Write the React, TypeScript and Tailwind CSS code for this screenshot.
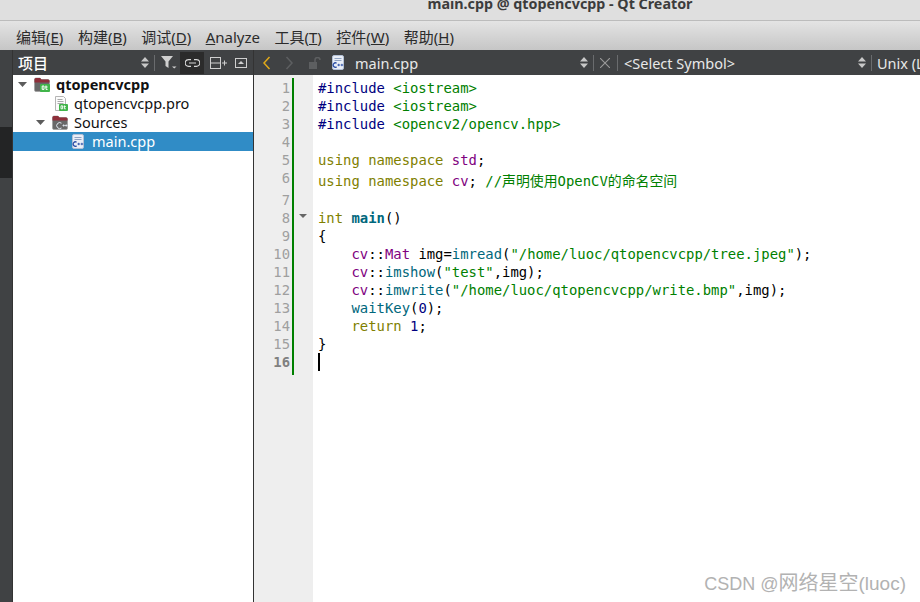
const ui = "font-['Noto_Sans','Noto_Sans_CJK_SC',sans-serif]";

const menus = [
  ["编辑(", "E", ")"],
  ["构建(", "B", ")"],
  ["调试(", "D", ")"],
  ["", "A", "nalyze"],
  ["工具(", "T", ")"],
  ["控件(", "W", ")"],
  ["帮助(", "H", ")"],
];

// colour shorthand for the code spans
const KW = "text-[#808000]";
const INC = "text-[#000080]";
const STR = "text-[#008000]";
const NS = "text-[#800080]";
const FN = "text-[#00677c]";

type Span = [string, string?];

const lines: { h: string; pad?: string; spans: Span[] }[] = [
  { h: "h-[18px]", spans: [["#include", INC], [" "], ["<iostream>", STR]] },
  { h: "h-[18px]", spans: [["#include", INC], [" "], ["<iostream>", STR]] },
  { h: "h-[18px]", spans: [["#include", INC], [" "], ["<opencv2/opencv.hpp>", STR]] },
  { h: "h-[18px]", spans: [] },
  { h: "h-[18px]", spans: [["using", KW], [" "], ["namespace", KW], [" "], ["std", NS], [";"]] },
  { h: "h-[22px]", pad: "pt-[3px]", spans: [["using", KW], [" "], ["namespace", KW], [" "], ["cv", NS], ["; "], ["//声明使用OpenCV的命名空间", STR]] },
  { h: "h-[18px]", spans: [] },
  { h: "h-[18px]", spans: [["int", KW], [" "], ["main", "text-[#00677c] font-bold"], ["()"]] },
  { h: "h-[18px]", spans: [["{"]] },
  { h: "h-[18px]", spans: [["    "], ["cv", NS], ["::"], ["Mat", NS], [" img="], ["imread", FN], ["("], ['"/home/luoc/qtopencvcpp/tree.jpeg"', STR], [");"]] },
  { h: "h-[18px]", spans: [["    "], ["cv", NS], ["::"], ["imshow", FN], ["("], ['"test"', STR], [",img);"]] },
  { h: "h-[18px]", spans: [["    "], ["cv", NS], ["::"], ["imwrite", FN], ["("], ['"/home/luoc/qtopencvcpp/write.bmp"', STR], [",img);"]] },
  { h: "h-[18px]", spans: [["    "], ["waitKey", FN], ["("], ["0", INC], [");"]] },
  { h: "h-[18px]", spans: [["    "], ["return", KW], [" "], ["1", INC], [";"]] },
  { h: "h-[18px]", spans: [["}"]] },
  { h: "h-[18px]", spans: [] },
];

function UpDown({ className = "" }: { className?: string }) {
  return (
    <svg width="8" height="11" viewBox="0 0 8 11" className={className}>
      <path d="M4 0 8 4.500H0zM4 11 0 6.500H8z" fill="#c8c8c8" />
    </svg>
  );
}

function FolderIcon({ badge }: { badge: "qt" | "c" }) {
  return (
    <svg width="16" height="15" viewBox="0 0 16 15" className="shrink-0">
      <path d="M.5 2.500Q.5 1 2 1h4l1.500 1.500H14q1.500 0 1.500 1.500v9q0 1.500-1.500 1.500H2Q.5 14.500.5 13z" fill="#686868" stroke="#9a9a9a" strokeWidth=".6" />
      <path d="M.5 2.500Q.5 1 2 1h4l1.500 1.500H14q1.500 0 1.500 1.500v1.500H.5z" fill="#8f2f3a" />
      {badge === "qt" ? (
        <g>
          <rect x="6" y="7" width="10" height="8" rx="1" fill="#41b54a" />
          <path d="M8.200 9h1.800v3.400H8.200zM12 8.500v3.900h1.600M11.200 10h2.400" fill="none" stroke="#fff" strokeWidth="1" />
        </g>
      ) : (
        <g fill="none" stroke="#e4eaf4" strokeWidth="1">
          <path d="M9.500 8.200a3 3 0 1 0 0 4.800" />
          <path d="M10.500 10.500h2.400M11.700 9.300v2.400M13 10.500h2.400M14.200 9.300v2.400" strokeWidth=".8" />
        </g>
      )}
    </svg>
  );
}

function FileIcon({ kind }: { kind: "qt" | "cpp" }) {
  if (kind === "cpp") {
    return (
      <svg width="12" height="15" viewBox="0 0 12 15" className="shrink-0">
        <rect x=".5" y=".5" width="11" height="14" rx="1.500" fill="#e9eef7" stroke="#b3c0d6" />
        <path d="M2.500 3.500h7M2.500 5.500h7" stroke="#8fa2c2" />
        <path d="M4.600 8.200a2.200 2.200 0 1 0 0 3.700" fill="none" stroke="#2b4ea6" strokeWidth="1.300" />
        <path d="M5.400 10h2.600M6.700 8.800v2.400M8.600 10h2.600M9.900 8.800v2.400" stroke="#2b4ea6" strokeWidth=".9" />
      </svg>
    );
  }
  return (
    <svg width="14" height="15" viewBox="0 0 14 15" className="shrink-0">
      <path d="M1.500.5h8l2 2v12h-10z" fill="#fbfbfb" stroke="#b5b5b5" />
      <path d="M3.500 3.500h5M3.500 5.500h6M3.500 7.500h6" stroke="#a9a9a9" />
      <rect x="5" y="8" width="9" height="7" rx="1" fill="#41b54a" />
      <path d="M7 9.800h1.600v3H7zM10.400 9.400v3.400h1.400M9.700 10.600h2.200" fill="none" stroke="#fff" strokeWidth=".9" />
    </svg>
  );
}

function Arrow() {
  return (
    <svg width="9" height="5" viewBox="0 0 9 5" className="shrink-0">
      <path d="M0 0h9L4.500 5z" fill="#5c5c5c" />
    </svg>
  );
}

function Sep() {
  return <span className="block w-px h-[16px] bg-[#6a6c6e] shrink-0" />;
}

export default function App() {
  return (
    <div className={`relative w-[920px] h-[602px] overflow-hidden flex flex-col bg-white ${ui}`}>
      {/* title bar */}
      <div className="h-[21px] shrink-0 bg-[#dfdfdf] border-b border-[#bcbcbc] flex justify-center overflow-hidden">
        <span className="ml-[200px] -mt-[6px] text-[14.3px] font-bold text-[#3c3c3c] leading-[20px]">
          main.cpp @ qtopencvcpp - Qt Creator
        </span>
      </div>

      {/* menu bar */}
      <div className="h-[29px] shrink-0 bg-gradient-to-b from-[#e4e4e4] to-[#c6c6c6] flex items-center pl-[16px] gap-[14.5px] text-[15px] text-[#2b2b2b] pt-[3px]">
        {menus.map(([a, b, c]) => (
          <span key={a + b}>
            {a}
            <span className="underline">{b}</span>
            {c}
          </span>
        ))}
      </div>

      <div className="flex-1 flex min-h-0">
        {/* far left mode strip */}
        <div className="w-[13px] shrink-0 bg-[#404244] border-r border-[#333] flex flex-col">
          <div className="h-[51px] mt-[77px] bg-[#232425] shrink-0" />
        </div>

        {/* project pane */}
        <div className="w-[241px] shrink-0 flex flex-col border-r border-[#333]">
          <div className="h-[25px] shrink-0 bg-[#404244] flex items-center text-white">
            <span className="ml-[5px] pt-[2px] text-[15px] font-medium">项目</span>
            <UpDown className="ml-auto" />
            <span className="w-px h-[16px] bg-[#6a6c6e] ml-[5px]" />
            <svg width="16" height="13" viewBox="0 0 16 13" className="ml-[6px]">
              <path d="M0 0h12L7.500 5.500V12L4.500 10V5.500z" fill="#cfcfcf" />
              <path d="M11 10.500h4.500l-2.250 2z" fill="#cfcfcf" />
            </svg>
            <span className="w-[24px] h-[22px] ml-[3px] mt-[1px] bg-[#2b2b2b] flex items-center justify-center">
              <svg width="15" height="8" viewBox="0 0 15 8" fill="none" stroke="#d8d8d8" strokeWidth="1.200">
                <path d="M6 .7H3.500a3.300 3.300 0 0 0 0 6.600H6M9 .7h2.500a3.300 3.300 0 0 1 0 6.600H9M4 4h7" />
              </svg>
            </span>
            <svg width="17" height="12" viewBox="0 0 17 12" className="ml-[6px]" fill="none" stroke="#cfcfcf">
              <rect x=".5" y=".5" width="10" height="11" />
              <path d="M.5 6h10M12 6h5M14.500 3.500v5" />
            </svg>
            <svg width="12" height="10" viewBox="0 0 12 10" className="ml-[8px] mr-[6px]">
              <rect x=".5" y=".5" width="11" height="9" fill="none" stroke="#cfcfcf" />
              <path d="M6 3 9 6H3z" fill="#cfcfcf" />
            </svg>
          </div>

          {/* tree */}
          <div className="flex-1 bg-white text-[14.5px] text-[#111]">
            <div className="h-[19px] flex items-center">
              <span className="ml-[5px] w-[16px]"><Arrow /></span>
              <FolderIcon badge="qt" />
              <span className="ml-[6px] font-bold">qtopencvcpp</span>
            </div>
            <div className="h-[19px] flex items-center pl-[41px]">
              <FileIcon kind="qt" />
              <span className="ml-[6px]">qtopencvcpp.pro</span>
            </div>
            <div className="h-[19px] flex items-center">
              <span className="ml-[23px] w-[16px]"><Arrow /></span>
              <FolderIcon badge="c" />
              <span className="ml-[6px]">Sources</span>
            </div>
            <div className="h-[19px] flex items-center bg-[#308cc6] text-white pl-[59px]">
              <FileIcon kind="cpp" />
              <span className="ml-[8px]">main.cpp</span>
            </div>
          </div>
        </div>

        {/* editor */}
        <div className="flex-1 min-w-0 flex flex-col">
          <div className="h-[25px] shrink-0 bg-[#404244] flex items-center text-[14.5px] text-[#e8e8e8] whitespace-nowrap overflow-hidden">
            <svg width="9" height="14" viewBox="0 0 9 14" className="ml-[8px] shrink-0" fill="none" stroke="#e0a91a" strokeWidth="1.500">
              <path d="M7.500 1 2 7l5.500 6" />
            </svg>
            <svg width="9" height="14" viewBox="0 0 9 14" className="ml-[14px] shrink-0" fill="none" stroke="#5d5f61" strokeWidth="1.500">
              <path d="M1.500 1 7 7l-5.500 6" />
            </svg>
            <svg width="13" height="12" viewBox="0 0 13 12" className="ml-[15px] shrink-0">
              <rect x="0" y="5" width="8" height="7" fill="#5d5f61" />
              <path d="M6 5V3a2.500 2.500 0 0 1 5 0" fill="none" stroke="#5d5f61" strokeWidth="1.500" />
            </svg>
            <span className="ml-[10px] shrink-0"><FileIcon kind="cpp" /></span>
            <span className="ml-[11px] w-[225px] shrink-0 pt-[2px]">main.cpp</span>
            <UpDown className="shrink-0" />
            <span className="ml-[5px] shrink-0"><Sep /></span>
            <svg width="10" height="10" viewBox="0 0 10 10" className="ml-[6px] shrink-0" stroke="#9a9a9a" strokeWidth="1.100">
              <path d="M0 0l10 10M10 0 0 10" />
            </svg>
            <span className="ml-[7px] shrink-0"><Sep /></span>
            <span className="ml-[6px] w-[234px] shrink-0 pt-[2px]">&lt;Select Symbol&gt;</span>
            <UpDown className="shrink-0" />
            <span className="ml-[5px] shrink-0"><Sep /></span>
            <span className="ml-[5px] shrink-0 pt-[2px]">Unix (LF)</span>
          </div>

          <div className="flex-1 flex min-h-0 bg-white">
            {/* gutter */}
            <div className="w-[59px] shrink-0 bg-[#eeeeee] self-stretch relative font-['DejaVu_Sans_Mono',monospace] text-[13.9px] text-[#9f9f9f]">
              <div className="pt-[4px] w-[36px]">
                {lines.map((l, i) => (
                  <div
                    key={i}
                    className={`${l.h} leading-[18px] text-right ${i === 15 ? "font-bold text-[#808080]" : ""}`}
                  >
                    {i + 1}
                  </div>
                ))}
              </div>
              {/* modified-lines marker and fold arrow */}
              <span className="absolute left-[38px] top-[3px] w-[2px] h-[297px] bg-[#008000]" />
              <svg width="8" height="4" viewBox="0 0 8 4" className="absolute left-[45px] top-[139px]">
                <path d="M0 0h8L4 4z" fill="#666" />
              </svg>
            </div>

            {/* code */}
            <div className="flex-1 min-w-0 pt-[4px] pl-[5px] whitespace-pre font-['DejaVu_Sans_Mono','Noto_Sans_CJK_SC',monospace] text-[13.9px] text-black overflow-hidden">
              {lines.map((l, i) => (
                <div key={i} className={`${l.h} ${l.pad ?? ""} leading-[18px]`}>
                  {l.spans.map(([t, c], j) => (
                    <span key={j} className={c}>
                      {t}
                    </span>
                  ))}
                  {i === 15 && <span className="inline-block w-[2px] h-[18px] bg-black align-top" />}
                </div>
              ))}
            </div>
          </div>
        </div>
      </div>

      {/* blog watermark */}
      <span className="absolute right-[14px] top-[569px] text-[#b2b2b2] whitespace-nowrap leading-[28px] font-['Liberation_Sans','Noto_Sans_CJK_SC',sans-serif]">
        <span className="text-[18px]">CSDN @</span>
        <span className="text-[20px]">网络星空</span>
        <span className="text-[19px]">(luoc)</span>
      </span>
    </div>
  );
}
